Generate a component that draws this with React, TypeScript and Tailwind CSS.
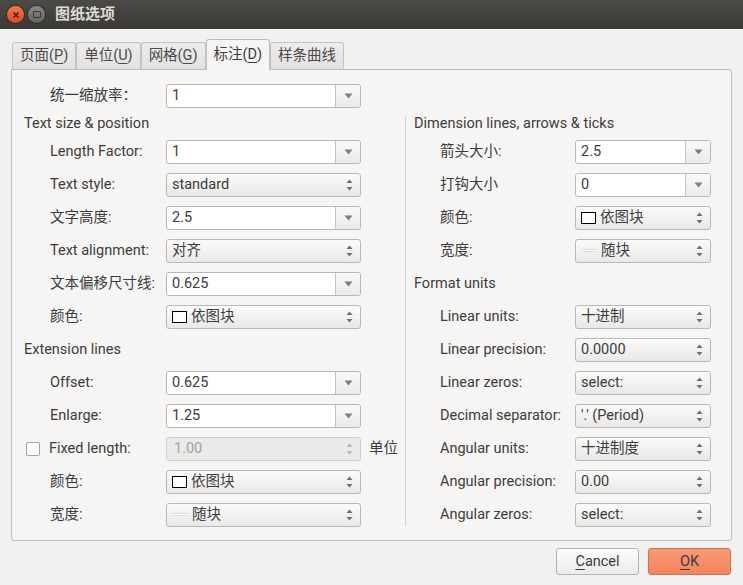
import type { ReactNode } from 'react';

const FONT = { fontFamily: "Roboto, 'Noto Sans CJK SC', sans-serif" };

const Caret = () => (
  <svg width="9" height="6" viewBox="0 0 9 6">
    <path d="M0.5 0.5 L8.5 0.5 L4.5 5.5 Z" fill="#7d7d7d" />
  </svg>
);

const UpDown = ({ faded = false }: { faded?: boolean }) => (
  <svg width="7" height="14" viewBox="0 0 7 14">
    <path d="M0.5 5 L6.5 5 L3.5 1.5 Z" fill={faded ? '#b9b9b9' : '#6e6e6e'} />
    <path d="M0.5 9 L6.5 9 L3.5 12.5 Z" fill={faded ? '#b9b9b9' : '#6e6e6e'} />
  </svg>
);

const ComboEntry = ({ value, width }: { value: string; width: string }) => (
  <div
    className={`flex h-[24px] ${width} overflow-hidden rounded-[3px] border border-[#b9b8b5] bg-white`}
  >
    <div className="flex flex-1 items-center px-[5px] text-[#3c3c3c]">{value}</div>
    <div className="flex w-[25px] items-center justify-center border-l border-[#c4c3c0] bg-gradient-to-b from-[#f9f9f8] to-[#ebeae9]">
      <Caret />
    </div>
  </div>
);

const Select = ({ children, width }: { children: ReactNode; width: string }) => (
  <div
    className={`flex h-[24px] ${width} items-center rounded-[3px] border border-[#b9b8b5] bg-gradient-to-b from-[#fbfbfa] to-[#e9e8e7] pl-[5px] pr-[7px] text-[#3c3c3c]`}
  >
    <div className="flex flex-1 items-center gap-[4px]">{children}</div>
    <UpDown />
  </div>
);

const Swatch = () => (
  <>
    <span className="inline-block h-[12px] w-[15px] border border-black bg-white" />
    <span>依图块</span>
  </>
);

const LineWidth = () => (
  <>
    <span className="inline-block h-[3px] w-[16px] border-y border-[#dcdcdc] bg-white" />
    <span>随块</span>
  </>
);

const Row = ({
  label,
  children,
  labelWidth,
}: {
  label: ReactNode;
  children: ReactNode;
  labelWidth: string;
}) => (
  <div className="flex h-[33px] items-center pl-[26px]">
    <div className={`${labelWidth} shrink-0 text-[#3c3c3c]`}>{label}</div>
    {children}
  </div>
);

const Header = ({ children, tall = false }: { children: ReactNode; tall?: boolean }) => (
  <div className={`flex ${tall ? 'h-[33px]' : 'h-[23px]'} items-center text-[#3c3c3c]`}>{children}</div>
);

const Tab = ({ children, active = false }: { children: ReactNode; active?: boolean }) => (
  <div
    className={
      active
        ? 'relative z-10 -mb-px flex h-[31px] items-center rounded-t-[3px] border border-b-0 border-[#bebdba] bg-[#f6f5f4] px-[7px] text-[#3c3c3c]'
        : 'flex h-[27px] items-center rounded-t-[3px] border border-b-0 border-[#c3c2bf] bg-gradient-to-b from-[#eeedec] to-[#e2e1df] px-[7px] text-[#4a4a4a]'
    }
  >
    {children}
  </div>
);

const U = ({ children }: { children: ReactNode }) => (
  <span className="underline decoration-1 underline-offset-[3px]">{children}</span>
);

export default function App() {
  const L = 'w-[195px]';
  const R = 'w-[136px]';
  return (
    <div style={FONT} className="flex h-[585px] w-[743px] flex-col bg-[#f2f1f0] text-[14.5px]">
      <div className="flex h-[29px] items-center bg-gradient-to-b from-[#4b4a46] to-[#3b3a36] pl-[7px]">
        <div className="flex h-[17px] w-[17px] items-center justify-center rounded-full bg-gradient-to-b from-[#f4784d] to-[#de4a1f] shadow-[0_0_0_1px_#2f2e2b]">
          <svg width="8" height="8" viewBox="0 0 8 8">
            <path d="M1.5 1.5 L6.5 6.5 M6.5 1.5 L1.5 6.5" stroke="#4a1a0a" strokeWidth="1.6" />
          </svg>
        </div>
        <div className="ml-[4px] flex h-[17px] w-[17px] items-center justify-center rounded-full bg-gradient-to-b from-[#8a8985] to-[#64635f] shadow-[0_0_0_1px_#2f2e2b]">
          <span className="h-[7px] w-[8px] rounded-[1px] border-[1.5px] border-[#3a3936]" />
        </div>
        <div className="ml-[10px] text-[15px] font-bold text-[#dfdbd2]">图纸选项</div>
      </div>

      <div className="flex flex-1 flex-col px-[11px] pt-[10px]">
        <div className="flex items-end pl-px">
          <Tab>
            页面(<U>P</U>)
          </Tab>
          <Tab>
            单位(<U>U</U>)
          </Tab>
          <Tab>
            网格(<U>G</U>)
          </Tab>
          <Tab active>
            标注(<U>D</U>)
          </Tab>
          <Tab>样条曲线</Tab>
        </div>

        <div className="flex h-[472px] rounded-b-[3px] rounded-tr-[3px] border border-[#bebdba] bg-[#f6f5f4] pt-[9px]">
          <div className="flex w-[393px] flex-col pl-[12px]">
            <Row label="统一缩放率：" labelWidth="w-[116px]">
              <ComboEntry value="1" width={L} />
            </Row>
            <Header>Text size &amp; position</Header>
            <Row label="Length Factor:" labelWidth="w-[116px]">
              <ComboEntry value="1" width={L} />
            </Row>
            <Row label="Text style:" labelWidth="w-[116px]">
              <Select width={L}>standard</Select>
            </Row>
            <Row label="文字高度:" labelWidth="w-[116px]">
              <ComboEntry value="2.5" width={L} />
            </Row>
            <Row label="Text alignment:" labelWidth="w-[116px]">
              <Select width={L}>对齐</Select>
            </Row>
            <Row label="文本偏移尺寸线:" labelWidth="w-[116px]">
              <ComboEntry value="0.625" width={L} />
            </Row>
            <Row label="颜色:" labelWidth="w-[116px]">
              <Select width={L}>
                <Swatch />
              </Select>
            </Row>
            <Header tall>Extension lines</Header>
            <Row label="Offset:" labelWidth="w-[116px]">
              <ComboEntry value="0.625" width={L} />
            </Row>
            <Row label="Enlarge:" labelWidth="w-[116px]">
              <ComboEntry value="1.25" width={L} />
            </Row>
            <div className="flex h-[33px] items-center">
              <div className="flex w-[142px] shrink-0 items-center gap-[9px] pl-[2px]">
                <span className="h-[14px] w-[14px] rounded-[2px] border border-[#a5a4a1] bg-white" />
                <span className="text-[#3c3c3c]">Fixed length:</span>
              </div>
              <div className={`flex h-[24px] ${L} items-center rounded-[3px] border border-[#cfcecb] bg-[#ebeae9] pl-[7px] pr-[7px] text-[#a3a3a3]`}>
                <span className="flex-1">1.00</span>
                <UpDown faded />
              </div>
              <span className="ml-[8px] text-[#3c3c3c]">单位</span>
            </div>
            <Row label="颜色:" labelWidth="w-[116px]">
              <Select width={L}>
                <Swatch />
              </Select>
            </Row>
            <Row label="宽度:" labelWidth="w-[116px]">
              <Select width={L}>
                <LineWidth />
              </Select>
            </Row>
          </div>

          <div className="mb-[14px] mt-[37px] w-px bg-[#d3d2cf]" />

          <div className="flex flex-1 flex-col pl-[8px] pt-[33px]">
            <Header>Dimension lines, arrows &amp; ticks</Header>
            <Row label="箭头大小:" labelWidth="w-[135px]">
              <ComboEntry value="2.5" width={R} />
            </Row>
            <Row label="打钩大小" labelWidth="w-[135px]">
              <ComboEntry value="0" width={R} />
            </Row>
            <Row label="颜色:" labelWidth="w-[135px]">
              <Select width={R}>
                <Swatch />
              </Select>
            </Row>
            <Row label="宽度:" labelWidth="w-[135px]">
              <Select width={R}>
                <LineWidth />
              </Select>
            </Row>
            <Header tall>Format units</Header>
            <Row label="Linear units:" labelWidth="w-[135px]">
              <Select width={R}>十进制</Select>
            </Row>
            <Row label="Linear precision:" labelWidth="w-[135px]">
              <Select width={R}>0.0000</Select>
            </Row>
            <Row label="Linear zeros:" labelWidth="w-[135px]">
              <Select width={R}>select:</Select>
            </Row>
            <Row label="Decimal separator:" labelWidth="w-[135px]">
              <Select width={R}>'.' (Period)</Select>
            </Row>
            <Row label="Angular units:" labelWidth="w-[135px]">
              <Select width={R}>十进制度</Select>
            </Row>
            <Row label="Angular precision:" labelWidth="w-[135px]">
              <Select width={R}>0.00</Select>
            </Row>
            <Row label="Angular zeros:" labelWidth="w-[135px]">
              <Select width={R}>select:</Select>
            </Row>
          </div>
        </div>

        <div className="flex justify-end gap-[9px] pr-[1px] pt-[7px]">
          <button
            type="button"
            className="flex h-[27px] w-[83px] items-center justify-center rounded-[3px] border border-[#b4b3b0] bg-gradient-to-b from-[#fdfdfd] to-[#ecebea] text-[#3c3c3c]"
          >
            <U>C</U>ancel
          </button>
          <button
            type="button"
            className="flex h-[27px] w-[83px] items-center justify-center rounded-[3px] border border-[#d4714c] bg-gradient-to-b from-[#f79b76] to-[#f3845c] text-[#3c3c3c]"
          >
            <U>O</U>K
          </button>
        </div>
      </div>
    </div>
  );
}
